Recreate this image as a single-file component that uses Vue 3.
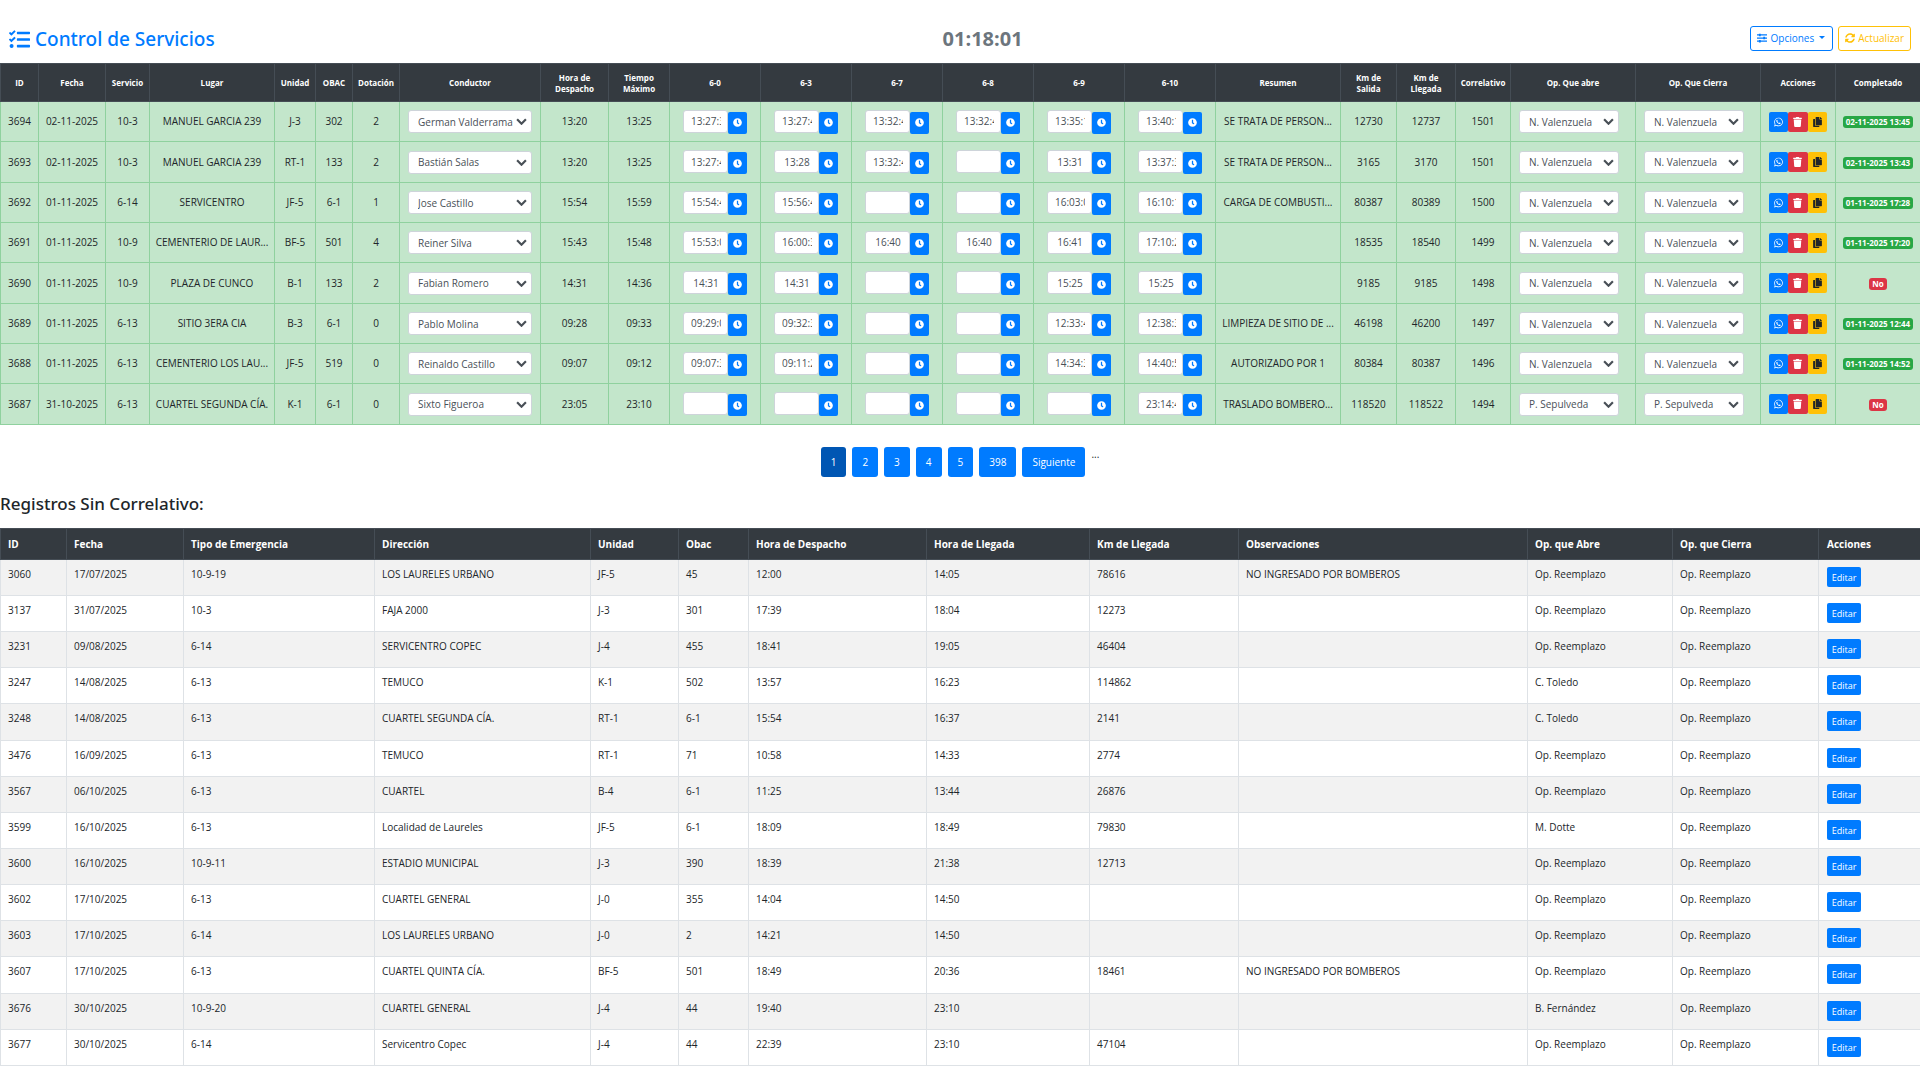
<script setup>
import { ref } from 'vue'

const columns = [
  ['ID', 38], ['Fecha', 67], ['Servicio', 44], ['Lugar', 125], ['Unidad', 41], ['OBAC', 37],
  ['Dotación', 47], ['Conductor', 141], ['Hora de\nDespacho', 68], ['Tiempo\nMáximo', 61],
  ['6-0', 91], ['6-3', 91], ['6-7', 91], ['6-8', 91], ['6-9', 91], ['6-10', 91],
  ['Resumen', 125], ['Km de\nSalida', 56], ['Km de\nLlegada', 59], ['Correlativo', 55],
  ['Op. Que abre', 125], ['Op. Que Cierra', 125], ['Acciones', 75], ['Completado', 85],
]
const codes = ['6-0', '6-3', '6-7', '6-8', '6-9', '6-10']

const service = (id, fecha, servicio, lugar, unidad, obac, dotacion, conductor, despacho, maximo, times, resumen, salida, llegada, correlativo, operador, completado) => ({
  id, fecha, servicio, lugar, unidad, obac, dotacion, conductor, despacho, maximo, times, resumen, salida, llegada, correlativo, abre: operador, cierra: operador, completado,
})

const services = ref([
  service(3694, '02-11-2025', '10-3', 'MANUEL GARCIA 239', 'J-3', '302', 2, 'German Valderrama', '13:20', '13:25', ['13:27:34', '13:27:42', '13:32:41', '13:32:44', '13:35:12', '13:40:15'], 'SE TRATA DE PERSON...', 12730, 12737, 1501, 'N. Valenzuela', '02-11-2025 13:45'),
  service(3693, '02-11-2025', '10-3', 'MANUEL GARCIA 239', 'RT-1', '133', 2, 'Bastián Salas', '13:20', '13:25', ['13:27:41', '13:28', '13:32:47', '', '13:31', '13:37:32'], 'SE TRATA DE PERSON...', 3165, 3170, 1501, 'N. Valenzuela', '02-11-2025 13:43'),
  service(3692, '01-11-2025', '6-14', 'SERVICENTRO', 'JF-5', '6-1', 1, 'Jose Castillo', '15:54', '15:59', ['15:54:41', '15:56:44', '', '', '16:03:05', '16:10:12'], 'CARGA DE COMBUSTI...', 80387, 80389, 1500, 'N. Valenzuela', '01-11-2025 17:28'),
  service(3691, '01-11-2025', '10-9', 'CEMENTERIO DE LAUR...', 'BF-5', '501', 4, 'Reiner Silva', '15:43', '15:48', ['15:53:02', '16:00:31', '16:40', '16:40', '16:41', '17:10:22'], '', 18535, 18540, 1499, 'N. Valenzuela', '01-11-2025 17:20'),
  service(3690, '01-11-2025', '10-9', 'PLAZA DE CUNCO', 'B-1', '133', 2, 'Fabian Romero', '14:31', '14:36', ['14:31', '14:31', '', '', '15:25', '15:25'], '', 9185, 9185, 1498, 'N. Valenzuela', ''),
  service(3689, '01-11-2025', '6-13', 'SITIO 3ERA CIA', 'B-3', '6-1', 0, 'Pablo Molina', '09:28', '09:33', ['09:29:03', '09:32:31', '', '', '12:33:42', '12:38:30'], 'LIMPIEZA DE SITIO DE ...', 46198, 46200, 1497, 'N. Valenzuela', '01-11-2025 12:44'),
  service(3688, '01-11-2025', '6-13', 'CEMENTERIO LOS LAU...', 'JF-5', '519', 0, 'Reinaldo Castillo', '09:07', '09:12', ['09:07:33', '09:11:24', '', '', '14:34:35', '14:40:51'], 'AUTORIZADO POR 1', 80384, 80387, 1496, 'N. Valenzuela', '01-11-2025 14:52'),
  service(3687, '31-10-2025', '6-13', 'CUARTEL SEGUNDA CÍA.', 'K-1', '6-1', 0, 'Sixto Figueroa', '23:05', '23:10', ['', '', '', '', '', '23:14:43'], 'TRASLADO BOMBERO...', 118520, 118522, 1494, 'P. Sepulveda', ''),
])

const drivers = services.value.map((s) => s.conductor)
const operators = ['N. Valenzuela', 'P. Sepulveda', 'C. Toledo', 'M. Dotte', 'B. Fernández']

const pages = ['1', '2', '3', '4', '5', '398', 'Siguiente']

const recordColumns = [
  ['ID', 66], ['Fecha', 117], ['Tipo de Emergencia', 191], ['Dirección', 216], ['Unidad', 88], ['Obac', 70],
  ['Hora de Despacho', 178], ['Hora de Llegada', 163], ['Km de Llegada', 149], ['Observaciones', 289],
  ['Op. que Abre', 145], ['Op. que Cierra', 146], ['Acciones', 102],
]
const R = 'Op. Reemplazo'
const records = [
  ['3060', '17/07/2025', '10-9-19', 'LOS LAURELES URBANO', 'JF-5', '45', '12:00', '14:05', '78616', 'NO INGRESADO POR BOMBEROS', R, R],
  ['3137', '31/07/2025', '10-3', 'FAJA 2000', 'J-3', '301', '17:39', '18:04', '12273', '', R, R],
  ['3231', '09/08/2025', '6-14', 'SERVICENTRO COPEC', 'J-4', '455', '18:41', '19:05', '46404', '', R, R],
  ['3247', '14/08/2025', '6-13', 'TEMUCO', 'K-1', '502', '13:57', '16:23', '114862', '', 'C. Toledo', R],
  ['3248', '14/08/2025', '6-13', 'CUARTEL SEGUNDA CÍA.', 'RT-1', '6-1', '15:54', '16:37', '2141', '', 'C. Toledo', R],
  ['3476', '16/09/2025', '6-13', 'TEMUCO', 'RT-1', '71', '10:58', '14:33', '2774', '', R, R],
  ['3567', '06/10/2025', '6-13', 'CUARTEL', 'B-4', '6-1', '11:25', '13:44', '26876', '', R, R],
  ['3599', '16/10/2025', '6-13', 'Localidad de Laureles', 'JF-5', '6-1', '18:09', '18:49', '79830', '', 'M. Dotte', R],
  ['3600', '16/10/2025', '10-9-11', 'ESTADIO MUNICIPAL', 'J-3', '390', '18:39', '21:38', '12713', '', R, R],
  ['3602', '17/10/2025', '6-13', 'CUARTEL GENERAL', 'J-0', '355', '14:04', '14:50', '', '', R, R],
  ['3603', '17/10/2025', '6-14', 'LOS LAURELES URBANO', 'J-0', '2', '14:21', '14:50', '', '', R, R],
  ['3607', '17/10/2025', '6-13', 'CUARTEL QUINTA CÍA.', 'BF-5', '501', '18:49', '20:36', '18461', 'NO INGRESADO POR BOMBEROS', R, R],
  ['3676', '30/10/2025', '10-9-20', 'CUARTEL GENERAL', 'J-4', '44', '19:40', '23:10', '', '', 'B. Fernández', R],
  ['3677', '30/10/2025', '6-14', 'Servicentro Copec', 'J-4', '44', '22:39', '23:10', '47104', '', R, R],
]
</script>

<template>
  <main class="page">
    <header class="topbar">
      <h1 class="title">
        <svg class="title-icon" viewBox="0 0 512 512" aria-hidden="true"><path d="M139.6 35.5a12 12 0 0 0-17 0L58.9 98.8l-22.7-22.1a12 12 0 0 0-17 0L3.5 92.4a12 12 0 0 0 0 17l47.6 47.4a12.8 12.8 0 0 0 17.6 0l15.6-15.6L156.5 69a12.1 12.1 0 0 0 .1-17zm0 159.2a12 12 0 0 0-17 0l-63.7 63.7-22.7-22.1a12 12 0 0 0-17 0L3.5 252a12 12 0 0 0 0 17L51 316.5a12.8 12.8 0 0 0 17.6 0l15.7-15.7 72.2-72.2a12 12 0 0 0 .1-16.9zM64 368c-26.500 0-48.600 21.500-48.600 48S37.500 464 64 464a48 48 0 0 0 0-96zm432 16H208a16 16 0 0 0-16 16v32a16 16 0 0 0 16 16h288a16 16 0 0 0 16-16v-32a16 16 0 0 0-16-16zm0-320H208a16 16 0 0 0-16 16v32a16 16 0 0 0 16 16h288a16 16 0 0 0 16-16V80a16 16 0 0 0-16-16zm0 160H208a16 16 0 0 0-16 16v32a16 16 0 0 0 16 16h288a16 16 0 0 0 16-16v-32a16 16 0 0 0-16-16z" /></svg>
        Control de Servicios
      </h1>
      <div class="clock">01:18:01</div>
      <div class="toolbar">
        <button type="button" class="outline outline-blue">
          <svg class="tool-icon" viewBox="0 0 16 16" aria-hidden="true"><path d="M0 2h3V1h3v1h10v2H6v1H3V4H0zM0 7h10V6h3v1h3v2h-3v1h-3V9H0zM0 12h3v-1h3v1h10v2H6v1H3v-1H0z" /></svg>
          Opciones
          <span class="caret"></span>
        </button>
        <button type="button" class="outline outline-yellow">
          <svg class="tool-icon" viewBox="0 0 512 512" aria-hidden="true"><path d="M370.7 133.3C339.500 104 298.900 88 255.800 88c-77.500.1-144.300 53.200-162.800 126.900-1.300 5.400-6.100 9.100-11.700 9.100H24.100c-7.500 0-13.200-6.800-11.800-14.200C33.900 94.900 134.800 8 256 8c66.400 0 126.800 26.100 171.300 68.700L463 41c15.100-15.100 41-4.400 41 17v134c0 13.300-10.700 24-24 24H346c-21.400 0-32.100-25.900-17-41zM32 296h134c21.400 0 32.100 25.900 17 41l-41.800 41.800c31.300 29.300 71.800 45.300 114.900 45.300 77.400-.1 144.300-53.100 162.800-126.800 1.300-5.400 6.100-9.100 11.700-9.100h57.300c7.500 0 13.200 6.800 11.800 14.200C478.100 417.100 377.200 504 256 504c-66.400 0-126.800-26.100-171.300-68.700L49 471c-15.100 15.100-41 4.400-41-17V320c0-13.300 10.700-24 24-24z" /></svg>
          Actualizar
        </button>
      </div>
    </header>

    <table class="services">
      <colgroup>
        <col v-for="[name, width] in columns" :key="name" :style="{ width: width + 'px' }" />
      </colgroup>
      <thead>
        <tr><th v-for="[name] in columns" :key="name" scope="col">{{ name }}</th></tr>
      </thead>
      <tbody>
        <tr v-for="s in services" :key="s.id">
          <td>{{ s.id }}</td>
          <td>{{ s.fecha }}</td>
          <td>{{ s.servicio }}</td>
          <td>{{ s.lugar }}</td>
          <td>{{ s.unidad }}</td>
          <td>{{ s.obac }}</td>
          <td>{{ s.dotacion }}</td>
          <td class="pick">
            <select v-model="s.conductor" class="field select" :aria-label="'Conductor ' + s.id">
              <option v-for="d in drivers" :key="d">{{ d }}</option>
            </select>
          </td>
          <td>{{ s.despacho }}</td>
          <td>{{ s.maximo }}</td>
          <td v-for="(code, i) in codes" :key="code">
            <div class="time">
              <input v-model="s.times[i]" type="text" class="field time-input" :aria-label="code + ' ' + s.id" />
              <button type="button" class="time-button" :aria-label="'Marcar ' + code">
                <svg viewBox="0 0 512 512" aria-hidden="true"><path d="M256 8C119 8 8 119 8 256s111 248 248 248 248-111 248-248S393 8 256 8zm57.100 350.100L224.900 294c-3.100-2.300-4.900-5.900-4.900-9.700V116c0-6.600 5.400-12 12-12h48c6.600 0 12 5.400 12 12v137.700l63.500 46.200c5.400 3.900 6.500 11.400 2.600 16.800l-28.200 38.800c-3.900 5.300-11.400 6.500-16.800 2.600z" /></svg>
              </button>
            </div>
          </td>
          <td>{{ s.resumen }}</td>
          <td>{{ s.salida }}</td>
          <td>{{ s.llegada }}</td>
          <td>{{ s.correlativo }}</td>
          <td class="pick">
            <select v-model="s.abre" class="field select operator" :aria-label="'Op. que abre ' + s.id">
              <option v-for="o in operators" :key="o">{{ o }}</option>
            </select>
          </td>
          <td class="pick">
            <select v-model="s.cierra" class="field select operator" :aria-label="'Op. que cierra ' + s.id">
              <option v-for="o in operators" :key="o">{{ o }}</option>
            </select>
          </td>
          <td class="pick">
            <div class="actions">
              <button type="button" class="action blue" aria-label="WhatsApp">
                <svg viewBox="0 0 448 512" aria-hidden="true"><path d="M380.900 97.100C339 55.100 283.200 32 223.900 32c-122.400 0-222 99.600-222 222 0 39.100 10.200 77.300 29.600 111L0 480l117.700-30.900c32.400 17.700 68.900 27 106.100 27h.1c122.300 0 224.100-99.600 224.100-222 0-59.300-25.200-115-67.100-157zm-157 341.600c-33.200 0-65.700-8.900-94-25.700l-6.700-4-69.800 18.300L72 359.200l-4.400-7c-18.500-29.400-28.200-63.300-28.200-98.200 0-101.700 82.800-184.500 184.600-184.500 49.300 0 95.600 19.200 130.400 54.100 34.800 34.900 56.200 81.200 56.100 130.500 0 101.800-84.900 184.600-186.600 184.600zm101.200-138.200c-5.500-2.800-32.800-16.200-37.900-18-5.100-1.900-8.800-2.800-12.500 2.800-3.700 5.600-14.300 18-17.600 21.800-3.200 3.700-6.500 4.200-12 1.400-32.600-16.300-54-29.100-75.500-66-5.700-9.800 5.700-9.100 16.300-30.300 1.800-3.700.9-6.900-.5-9.700-1.400-2.800-12.500-30.100-17.100-41.200-4.500-10.800-9.100-9.300-12.500-9.500-3.200-.2-6.900-.2-10.600-.2-3.700 0-9.700 1.400-14.800 6.900-5.100 5.600-19.400 19-19.400 46.300 0 27.300 19.900 53.700 22.600 57.400 2.800 3.700 39.100 59.700 94.800 83.800 35.200 15.200 49 16.500 66.600 13.900 10.700-1.600 32.800-13.400 37.400-26.400 4.600-13 4.600-24.100 3.200-26.400-1.300-2.500-5-3.900-10.500-6.600z" /></svg>
              </button>
              <button type="button" class="action red" aria-label="Eliminar">
                <svg viewBox="0 0 448 512" aria-hidden="true"><path d="M432 32H312l-9.400-18.700A24 24 0 0 0 281.100 0H166.800a23.700 23.700 0 0 0-21.400 13.300L136 32H16A16 16 0 0 0 0 48v32a16 16 0 0 0 16 16h416a16 16 0 0 0 16-16V48a16 16 0 0 0-16-16zM53.200 467a48 48 0 0 0 47.900 45h245.800a48 48 0 0 0 47.900-45L416 128H32z" /></svg>
              </button>
              <button type="button" class="action yellow" aria-label="Copiar">
                <svg viewBox="0 0 448 512" aria-hidden="true"><path d="M320 448v40c0 13.300-10.700 24-24 24H24c-13.300 0-24-10.700-24-24V120c0-13.300 10.700-24 24-24h72v296c0 30.900 25.100 56 56 56zm0-344V0H152c-13.300 0-24 10.700-24 24v368c0 13.300 10.700 24 24 24h272c13.300 0 24-10.700 24-24V128H344c-13.200 0-24-10.800-24-24zm121-31L375 7A24 24 0 0 0 358.100 0H352v96h96v-6.100a24 24 0 0 0-7-16.900z" /></svg>
              </button>
            </div>
          </td>
          <td class="status"><span class="badge" :class="{ pending: !s.completado }">{{ s.completado || 'No' }}</span></td>
        </tr>
      </tbody>
    </table>

    <nav class="pagination" aria-label="Páginas">
      <button v-for="p in pages" :key="p" type="button" class="page-button" :class="{ current: p === '1' }">{{ p }}</button>
      <span class="more">...</span>
    </nav>

    <h2 class="subtitle">Registros Sin Correlativo:</h2>

    <table class="records">
      <colgroup>
        <col v-for="[name, width] in recordColumns" :key="name" :style="{ width: width + 'px' }" />
      </colgroup>
      <thead>
        <tr><th v-for="[name] in recordColumns" :key="name" scope="col">{{ name }}</th></tr>
      </thead>
      <tbody>
        <tr v-for="r in records" :key="r[0]">
          <td v-for="(cell, i) in r" :key="i">{{ cell }}</td>
          <td><button type="button" class="edit">Editar</button></td>
        </tr>
      </tbody>
    </table>
  </main>
</template>

<style>
body {
  margin: 0;
  background: #fff;
}
</style>

<style scoped>
.page {
  font-family: 'Segoe UI', 'Open Sans', 'Noto Sans', sans-serif;
  font-size: 10px;
  line-height: 15px;
  color: #212529;
  padding-bottom: 8px;
}

button,
input,
select {
  font-family: inherit;
  font-size: inherit;
  margin: 0;
}

.topbar {
  display: flex;
  justify-content: space-between;
  align-items: center;
  padding: 15px 9px 2px;
  height: 46px;
}

.title,
.subtitle {
  font-family: 'Segoe UI', 'Noto Sans', sans-serif;
  font-weight: 500;
}

.title {
  display: flex;
  align-items: center;
  gap: 5px;
  margin: 0;
  padding-top: 2px;
  font-size: 19px;
  line-height: 24px;
  color: #007bff;
}

.title-icon {
  width: 21px;
  height: 21px;
  fill: currentColor;
}

.clock {
  padding-top: 2px;
  font-size: 20px;
  font-weight: 700;
  line-height: 24px;
  color: #6c757d;
}

.toolbar {
  display: flex;
  gap: 5px;
}

.outline {
  display: flex;
  align-items: center;
  justify-content: center;
  gap: 3px;
  height: 25px;
  padding: 0 6px;
  border: 1px solid currentColor;
  border-radius: 3px;
  background: #fff;
}

.outline-blue {
  color: #007bff;
}

.outline-yellow {
  color: #ffc107;
}

.tool-icon {
  width: 10px;
  height: 10px;
  fill: currentColor;
}

.caret {
  margin: 0 1px 2px 2px;
  border: 3px solid transparent;
  border-top-color: currentColor;
  border-bottom: 0;
}

table {
  width: 100%;
  table-layout: fixed;
  border-collapse: collapse;
}

th {
  background: #343a40;
  border: 1px solid #454d55;
  color: #fff;
  font-weight: 700;
}

.services th {
  height: 37px;
  padding: 0;
  font-size: 8px;
  line-height: 11px;
  white-space: pre-line;
}

.services td {
  height: 39px;
  padding: 0;
  border: 1px solid #8fd19e;
  background: #c3e6cb;
  text-align: center;
  white-space: nowrap;
}

.services tr:nth-child(3n + 2) td {
  height: 40px;
}

.services td.pick {
  padding: 0 8px;
  text-align: left;
}

.field {
  box-sizing: border-box;
  height: 23px;
  border: 1px solid #ced4da;
  border-radius: 3px;
  background: #fff;
  color: #495057;
}

.select {
  display: block;
  width: 100%;
  padding: 0 16px 0 9px;
  appearance: none;
  background: #fff url("data:image/svg+xml,%3Csvg xmlns='http://www.w3.org/2000/svg' viewBox='0 0 10 6'%3E%3Cpath d='M1 1l4 4 4-4' fill='none' stroke='%23495057' stroke-width='2'/%3E%3C/svg%3E") no-repeat right 4px center / 11px 7px;
}

.operator {
  width: 100px;
}

.time {
  display: flex;
  justify-content: center;
}

.time-input {
  width: 45px;
  padding: 0 6px 0 7px;
  text-align: center;
}

.time-button {
  display: flex;
  align-items: center;
  justify-content: center;
  width: 19px;
  height: 22px;
  margin-top: 2px;
  padding: 0;
  border: 0;
  border-radius: 2px;
  background: #007bff;
}

.time-button svg {
  width: 9px;
  height: 9px;
  fill: #fff;
}

.actions {
  display: flex;
}

.action {
  display: flex;
  align-items: center;
  justify-content: center;
  width: 20px;
  height: 20px;
  padding: 0;
  border: 0;
  border-radius: 2px;
}

.action svg {
  width: 9px;
  height: 10px;
}

.blue {
  background: #007bff;
  fill: #fff;
}

.red {
  background: #dc3545;
  fill: #fff;
}

.yellow {
  background: #ffc107;
  fill: #212529;
}

.badge {
  display: inline-block;
  padding: 0 3px;
  border-radius: 3px;
  background: #28a745;
  color: #fff;
  font-size: 8px;
  font-weight: 700;
  line-height: 12px;
}

.badge.pending {
  background: #dc3545;
}

.pagination {
  display: flex;
  justify-content: center;
  gap: 6px;
  margin-top: 22px;
}

.page-button {
  height: 30px;
  padding: 0 10px;
  border: 0;
  border-radius: 3px;
  background: #007bff;
  color: #fff;
}

.page-button.current {
  background: #0056b3;
}

.subtitle {
  margin: 16px 0 14px;
  font-size: 17px;
  line-height: 21px;
}

.records th {
  height: 30px;
  padding: 0 7px;
  text-align: left;
}

.records td {
  height: 20px;
  padding: 7px 7px 8px;
  border: 1px solid #dee2e6;
  vertical-align: top;
}

.records th:last-child,
.records td:last-child {
  padding-left: 8px;
}

.records tbody tr:nth-child(7n + 5) td {
  height: 21px;
}

.records tbody tr:nth-child(odd) {
  background: #f2f2f2;
}

.edit {
  display: block;
  height: 20px;
  padding: 0 4px;
  min-width: 34px;
  border: 0;
  border-radius: 2px;
  background: #007bff;
  color: #fff;
  font-size: 9px;
}
</style>
